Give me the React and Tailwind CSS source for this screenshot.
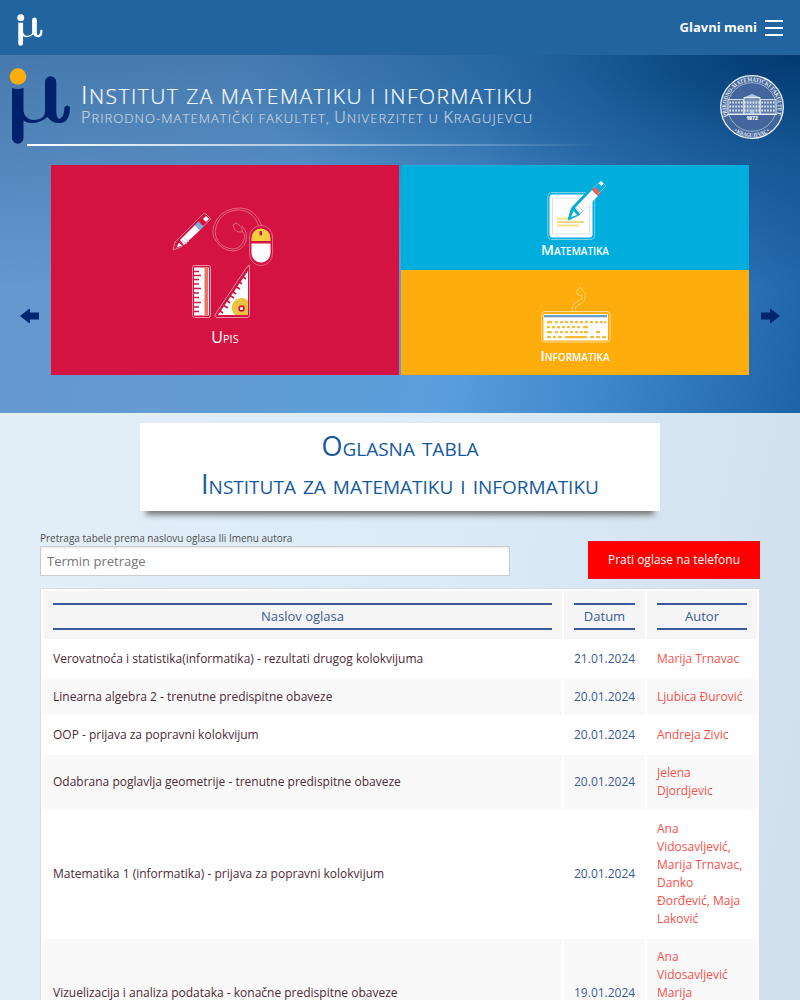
const rows = [
  ["Verovatnoća i statistika(informatika) - rezultati drugog kolokvijuma", "21.01.2024", "Marija Trnavac"],
  ["Linearna algebra 2 - trenutne predispitne obaveze", "20.01.2024", "Ljubica Đurović"],
  ["OOP - prijava za popravni kolokvijum", "20.01.2024", "Andreja Zivic"],
  ["Odabrana poglavlja geometrije - trenutne predispitne obaveze", "20.01.2024", "Jelena Djordjevic"],
  ["Matematika 1 (informatika) - prijava za popravni kolokvijum", "20.01.2024", "Ana Vidosavljević, Marija Trnavac, Danko Đorđević, Maja Laković"],
  ["Vizuelizacija i analiza podataka - konačne predispitne obaveze", "19.01.2024", "Ana Vidosavljević Marija"],
];

function Mu({ className, dot }) {
  return (
    <svg viewBox="0 0 62 76" className={className} fill="none">
      <circle cx="9" cy="8.5" r="8.3" fill={dot} />
      <path d="M3 20 Q8.500 22 14.500 20 V70 A5.750 5.750 0 0 1 3 70 Z" fill="currentColor" />
      <path d="M36 48 V14 A5.600 5.600 0 0 1 47.300 14 V44 Q48 54 53 49 Q55 47 55.500 39 Q58 36 61 39 Q61 52 54 54.500 Q44 57 38.500 49 Q31 55 23 55 Q16 55 13 51 V36 Q14 52 25 52 Q36 51 36 44 Z" fill="currentColor" />
    </svg>
  );
}

function Seal() {
  return (
    <svg viewBox="0 0 64 64" className="size-16">
      <circle cx="32" cy="32" r="31.300" fill="#42669c" stroke="#f4f6fa" strokeWidth="1.300" />
      <circle cx="32" cy="32" r="24.300" fill="none" stroke="#c5d1e3" strokeWidth=".7" />
      <path id="sealTop" d="M8.100 41.300 A25.600 25.600 0 1 1 55.900 41.300" fill="none" />
      <path id="sealBottom" d="M14 56.200 A30.200 30.200 0 0 0 50 56.200" fill="none" />
      <text fill="#e8edf5" fontSize="6.200" fontFamily="Liberation Serif, serif" fontWeight="bold">
        <textPath href="#sealTop" textLength="97" lengthAdjust="spacingAndGlyphs">PRIRODNO-MATEMATIČKI FAKULTET</textPath>
      </text>
      <text fill="#e8edf5" fontSize="6" fontFamily="Liberation Serif, serif" fontWeight="bold">
        <textPath href="#sealBottom" textLength="38" lengthAdjust="spacingAndGlyphs">• KRAGUJEVAC •</textPath>
      </text>
      <path d="M8 24.500 H24 V39 H8 Z M56 24.500 H40 V39 H56 Z" fill="#5f7caa" stroke="#d5dfeb" strokeWidth="1" />
      <path d="M24 22.500 H40 V39 H24 Z" fill="#7b93b9" stroke="#e8eff6" strokeWidth="1" />
      <path d="M25 22 L32 19 L39 22 Z" fill="#a7cbe5" />
      <path d="M9.500 27.500 H55 M9.500 31.500 H55 M9.500 35.500 H55" stroke="#edf2f8" strokeWidth="2" strokeDasharray="1.500 1.400" />
      <path d="M7 39.500 H57" stroke="#e8edf5" />
      <rect x="30" y="35" width="4" height="4" fill="#a7cbe5" />
      <text x="32" y="45" textAnchor="middle" fontSize="5" fontWeight="800" fontFamily="Open Sans, sans-serif" fill="#fff">1972</text>
    </svg>
  );
}

function Pen({ outline, band, body }) {
  return (
    <g>
      <path d="M0 0 L3.500 -12 L31 -41 Q33 -43 35 -41 L38 -38 Q39 -36 37.500 -34 L11 -5 Z" fill={body} stroke={outline} strokeWidth="1" />
      <path d="M3 -3 L5.500 -9 L9 -5 Z M7 -12 L24 -30 L30 -24 L12 -6 Z" fill="#fff" />
      <path d="M24 -30 L27 -33 L33 -27 L30 -24 Z" fill={band} />
      <path d="M30.500 -37 L33 -39.500 L36 -36.500 L33.500 -34 Z" fill="#fff" />
    </g>
  );
}

function UpisIcon() {
  return (
    <svg viewBox="0 0 104 114" className="mr-0.5 h-[114px] w-[104px]" fill="none">
      <g transform="translate(1 43)">
        <path d="M0 0 L2 -8 L29 -35 Q31 -38 33 -36 L37 -32 Q38 -31 36 -29 L8 -3 Z" stroke="#e98098" />
        <path d="M3.500 -2.500 L6 -7.500 L9 -4.500 Z M7 -10 L22 -25 L27 -20 L11 -5 Z" fill="#fff" />
        <path d="M22 -25 L25.500 -28.500 L30.500 -23.500 L27 -20 Z" fill="#77b2e1" />
        <path d="M30 -31 L33 -34 L36 -31 L33 -28 Z" fill="#fff" />
        <path d="M9 -10 L14 -6 M11 -12 L16 -8" stroke="#cdbbc4" strokeWidth=".7" />
      </g>
      <g stroke="#e56d89" strokeWidth=".9">
        <path d="M90 19 Q83 1 68 1 Q53 1 45 12 Q37 25 44 34 Q51 44 62 44 Q71 43 74 34 Q76 25 70 19" />
        <path d="M87 19 Q81 3 67 3 Q54 3 47 13 Q40 25 46 34 Q52 42 62 42 Q69 41 72 33 Q74 27 69 23" />
        <path d="M69 25 Q63 25 62 21 L61 18 L64 16 L67 18 Q71 20 70 25 Z" fill="#d41342" />
        <rect x="77.500" y="18.500" width="23" height="40" rx="11.500" />
      </g>
      <path d="M79.500 34 V31 A9.500 9.500 0 0 1 98.500 31 V34 Z" fill="#f2ce43" />
      <path d="M79.500 36.500 H98.500 V46 A9.500 9.500 0 0 1 79.500 46 Z" fill="#fff" />
      <rect x="87.500" y="24" width="2.500" height="4.500" rx="1" fill="#d41342" />
      <rect x="20.500" y="58.500" width="18" height="52" rx="2" stroke="#ee8ea5" />
      <rect x="22" y="60.500" width="15" height="48" fill="#fff" />
      <rect x="32.500" y="60.500" width="3.500" height="48" fill="#e57463" />
      <path d="M22 64.500 H27 M22 68.500 H29 M22 72.500 H27 M22 77 H27 M22 81.500 H29 M22 86 H27 M22 90.500 H27 M22 95.500 H29 M22 100 H27 M22 104.500 H27" stroke="#d41342" strokeWidth="1.600" />
      <path d="M77.500 58 V108 Q77.500 110.500 75 110.500 H45 Q42 110 43.500 107 L75 60 Z" stroke="#ee8ea5" />
      <path d="M76 64 V108 H46 Z" fill="#fff" />
      <path d="M76 93.500 A9 9 0 1 0 63 108 H76 Z" fill="#e8c43f" />
      <circle cx="69.500" cy="101.500" r="2.400" fill="#fff" stroke="#d41342" strokeWidth="1.700" />
      <path d="M47 103 L51 106 M51 98 L56 101 M54 93 L58 96 M57 88 L62 91 M60 84 L64 87 M63 79 L68 82 M66 74 L70 77 M70 69 L74 72" stroke="#d41342" strokeWidth="1.600" />
    </svg>
  );
}

function MathIcon() {
  return (
    <svg viewBox="0 0 60 62" className="ml-[3px] h-[62px] w-[60px]" fill="none">
      <rect x=".7" y="12.500" width="47" height="47" rx="4" stroke="#78d2eb" />
      <rect x="2.500" y="14.500" width="43" height="43" rx="3" fill="#fff" />
      <rect x="5.500" y="18" width="37" height="36" stroke="#dddfe1" />
      <path d="M10 38.500 H25 M10 45.500 H32" stroke="#f7e185" strokeWidth="2" />
      <path d="M10 42 H37" stroke="#e8bf2d" strokeWidth="1.200" />
      <g transform="translate(21 40)"><Pen outline="#16a9cd" body="#00aedd" band="#ee6153" /></g>
      <path d="M46 8 L54 1 L59 6 L51 14" stroke="#78d2eb" strokeWidth=".8" />
      <path d="M29 28 L34 33 M31 26 L36 31" stroke="#c8d5da" strokeWidth=".8" />
    </svg>
  );
}

const keyRows = [
  [35, [[6, 5], [14, 3], [19, 3], [24, 3], [29, 3], [34, 3], [39, 3], [44, 3], [49, 3], [54, 3], [59, 3], [63, 2]]],
  [40, [[6, 3], [11, 3], [16, 3], [21, 3], [26, 3], [31, 3], [36, 3], [42, 5]]],
  [45, [[6, 5], [14, 3], [19, 3], [24, 3], [29, 3], [34, 3], [39, 3], [43, 4], [55, 4]]],
  [50, [[6, 4], [12, 3], [17, 4], [24, 22], [49, 4], [55, 4], [61, 4]]],
];

function KeyboardIcon() {
  return (
    <svg viewBox="0 0 70 56" className="ml-0.5 h-14 w-[70px]" fill="none">
      <g stroke="#ffd57d" strokeWidth=".9">
        <path d="M31 24 V21 Q31 17 37 14 Q42 12 41 9 L37 8 L35 4 L38 2 L39 0 L41 3 Q45 5 44 9 Q45 14 39 17 Q34 19 34 24" />
        <rect x=".7" y="24.500" width="68.500" height="30.500" rx="3" stroke="#ffe1a3" />
      </g>
      <rect x="2.500" y="27" width="64.500" height="26.500" rx="1" fill="#fff" />
      <rect x="3" y="28" width="63" height="2.300" fill="#6a9dc7" />
      {keyRows.map(([y, keys]) =>
        keys.map(([x, w]) => <rect key={`${x}-${y}`} x={x} y={y - 1} width={w} height="2.300" rx=".4" fill="#f8b831" />)
      )}
    </svg>
  );
}

function Arrow({ className }) {
  return (
    <svg viewBox="0 0 20 14" className={className}>
      <path d="M0 7 L9 0 H10 V3.500 H19 V10.500 H10 V14 H9 Z" fill="#00256f" />
    </svg>
  );
}

function Tile({ className, children }) {
  return <div className={`flex flex-col items-center text-white [font-variant:small-caps] ${className}`}>{children}</div>;
}

export default function App() {
  return (
    <div className="h-[1000px] w-[800px] overflow-hidden bg-[linear-gradient(100deg,#e4eff8_0%,#dcebf7_55%,#d0dfec_100%)] font-['Open_Sans',sans-serif]">
      <nav className="flex h-[55px] items-center justify-between bg-[#2164a0] pr-[17px] pl-[17px] text-white">
        <Mu className="mt-1 h-8 w-[26px]" dot="white" />
        <div className="flex items-center gap-2">
          <span className="text-[13px] font-bold">Glavni meni</span>
          <div className="flex w-[18px] flex-col gap-[5px]">
            <i className="h-0.5 bg-white" /><i className="h-0.5 bg-white" /><i className="h-0.5 bg-white" />
          </div>
        </div>
      </nav>

      <section className="flex h-[358px] flex-col bg-[radial-gradient(ellipse_70%_65%_at_100%_0%,#003a70_0%,#0b4a8899_40%,transparent_100%),linear-gradient(to_bottom,#1b4c8066_0%,transparent_65%),linear-gradient(100deg,#6497cd_0%,#649bd0_25%,#5a9fdd_58%,#3f88ca_76%,#1d64a7_100%)]">
        <header className="flex h-[110px] items-start pt-[13px] pl-[9px]">
          <Mu className="h-[76px] w-[62px] text-[#00216b]" dot="#ffad0d" />
          <div className="relative flex flex-col pt-3 pl-[10px] whitespace-nowrap">
            <svg width="460" height="50" className="overflow-visible font-['Open_Sans',sans-serif] font-light">
              <text x="0" y="23.500" fontSize="21" fill="#f8fbff" stroke="#f8fbff" strokeWidth=".2" textLength="451">
                <tspan fontSize="26">I</tspan>NSTITUT ZA MATEMATIKU I INFORMATIKU
              </text>
              <text x="0" y="43" fontSize="13" fill="#d0d7df" stroke="#d0d7df" strokeWidth=".15" textLength="451">
                <tspan fontSize="16">P</tspan>RIRODNO-MATEMATIČKI FAKULTET, <tspan fontSize="16">U</tspan>NIVERZITET U <tspan fontSize="16">K</tspan>RAGUJEVCU
              </text>
            </svg>
            <div className="absolute top-[76px] -left-[44px] h-0.5 w-[580px] bg-linear-to-r from-white to-transparent" />
          </div>
          <div className="mt-[7px] mr-4 ml-auto"><Seal /></div>
        </header>
        <div className="flex h-[210px] items-center justify-between pr-5 pl-5">
          <Arrow className="mt-[91px] h-3.5 w-5" />
          <div className="grid h-[210px] w-[698px] grid-cols-2 grid-rows-2 gap-x-0.5">
            <Tile className="row-span-2 bg-[#d41342] pt-[42px]">
              <UpisIcon />
              <span className="mt-1 text-base leading-6">Upis</span>
            </Tile>
            <Tile className="bg-[#00aedd] pt-[15px]">
              <MathIcon />
              <span className="-mt-px text-[14px] leading-[18px] font-semibold tracking-[-0.05px]">Matematika</span>
            </Tile>
            <Tile className="bg-[#ffad0d] pt-[17px]">
              <KeyboardIcon />
              <span className="mt-1 text-[14px] leading-[18px] font-semibold">Informatika</span>
            </Tile>
          </div>
          <Arrow className="mt-[91px] h-3.5 w-5 rotate-180" />
        </div>
      </section>

      <main className="px-10 pt-[10px]">
        <h1 className="mx-auto flex h-[88px] w-[520px] flex-col items-center bg-white pt-1 text-[27px] leading-[38px] text-[#1459a0] [font-variant:small-caps] shadow-[0_10px_6px_-6px_#777]">
          <span>Oglasna tabla</span>
          <span>Instituta za matematiku i informatiku</span>
        </h1>
        <div className="mt-[19px] flex justify-between">
          <label className="flex w-[470px] flex-col text-[10px] leading-4 text-[#4d4d4d]">
            Pretraga tabele prema naslovu oglasa Ili Imenu autora
            <input placeholder="Termin pretrage" className="h-[30px] border border-[#ccc] bg-white px-1.5 text-[13px] shadow-[inset_0_1px_2px_#0000001a] placeholder:text-[#757575]" />
          </label>
          <button className="mt-[11px] h-[38px] w-[172px] bg-[#f00] text-xs font-normal text-white">Prati oglase na telefonu</button>
        </div>
        <table className="mt-[9px] w-full table-fixed border-separate border-spacing-0.5 border border-[#ddd] bg-white text-xs leading-[18px]">
          <colgroup><col className="w-[519px]" /><col className="w-[81px]" /><col className="w-[110px]" /></colgroup>
          <thead>
            <tr className="h-12 bg-[#f5f5f5] text-[13px] text-[#3b5998]">
              {["Naslov oglasa", "Datum", "Autor"].map((h) => (
                <th key={h} className="px-[10px] pt-3 pb-[9px] font-normal">
                  <div className="h-[27px] border-y-2 border-[#3b5998] leading-[23px]">{h}</div>
                </th>
              ))}
            </tr>
          </thead>
          <tbody>
            {rows.map(([title, date, author]) => (
              <tr key={title} className="odd:bg-white even:bg-[#f9f9f9] last:h-[108px]">
                <td className="px-[10px] py-[9px] text-[#4a2a36]">{title}</td>
                <td className="px-[10px] py-[9px] text-[#3b5998]">{date}</td>
                <td className="px-[10px] py-[9px] align-top text-[#fa504a]">{author}</td>
              </tr>
            ))}
          </tbody>
        </table>
      </main>
    </div>
  );
}
